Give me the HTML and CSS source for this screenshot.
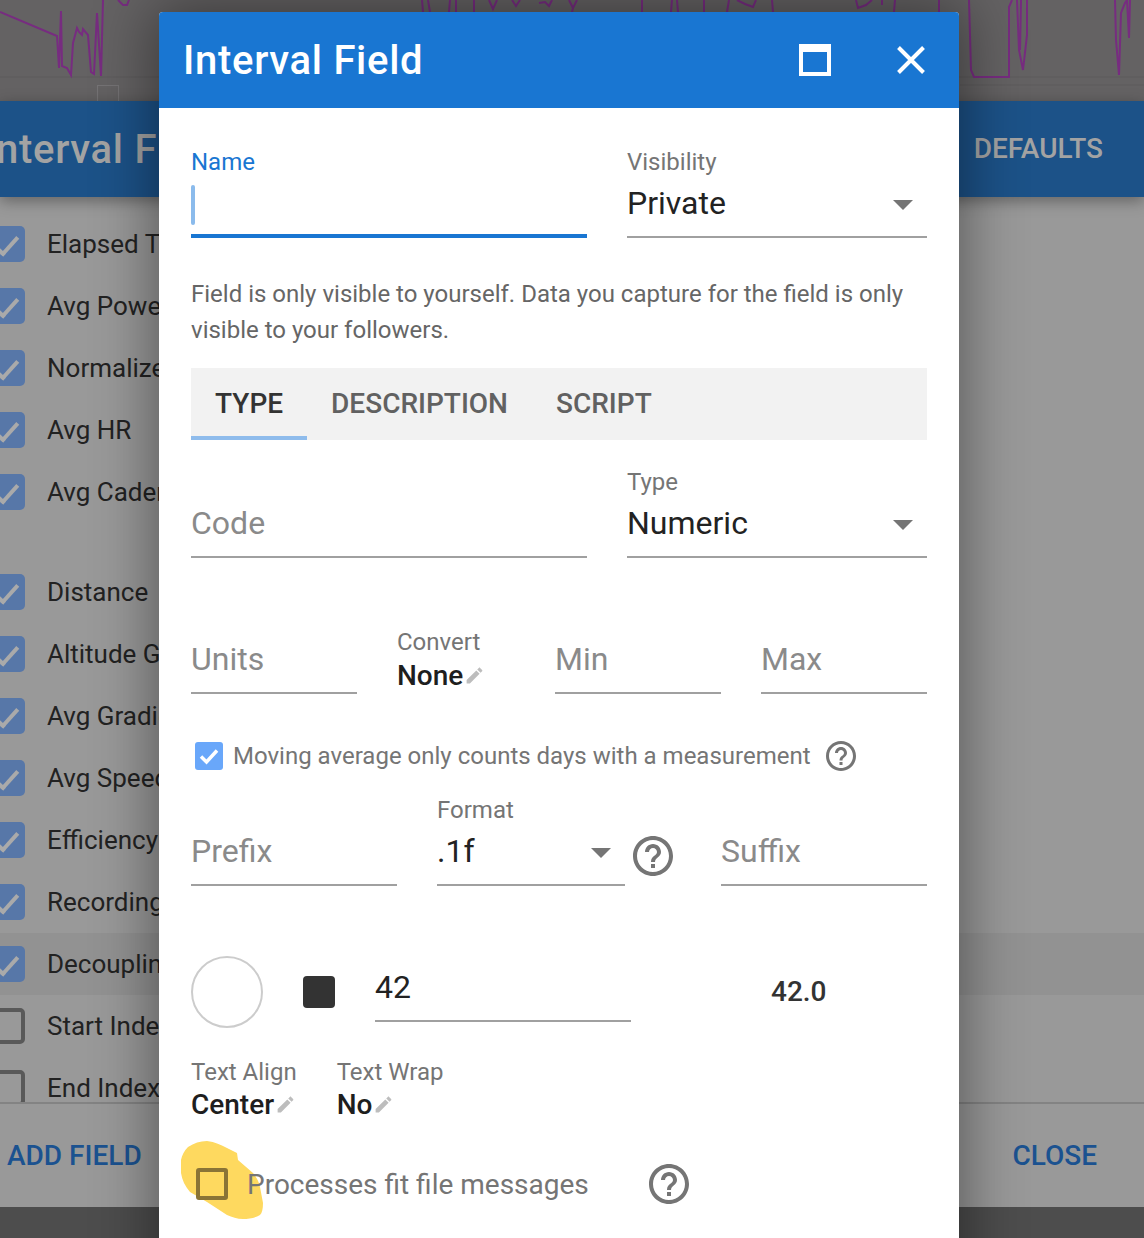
FILE: index.html
```html
<!DOCTYPE html>
<html lang="en">
<head>
  <meta charset="UTF-8" />
  <title>Interval Field</title>
  <link rel="stylesheet" href="styles.css">
</head>
<body>
  <div class="page">
    <div class="chart">
      <svg class="chart-lines" width="1144" height="101" viewBox="0 0 1144 101">
        <path class="grid" d="M0 77H1144"/>
        <path class="grid" d="M960 85H1144"/>
        <path d="M0 12L57 36L59 68L61 11L62 66L67 68L71 75L73 43L77 28L79 32L82 35L83 29L88 35L91 72L94 74L97 13L101 76L103 0"/>
        <path d="M118 0L123 5L127 5L129 0"/>
        <path d="M422 0L423 12M428 0L430 12M449 12L450 0M456 0L456 12M474 0L474 12"/>
        <path d="M489 0L493 9L497 0M512 0L516 6L520 0M539 3L545 2L549 6L552 0"/>
        <path d="M569 0L573 8L572 12M577 0L573 8M642 0L642 12M671 12L672 0M677 0L678 12M704 0L704 12M729 0L727 12"/>
        <path d="M737 0L745 4L753 7L756 0M772 0L773 12"/>
        <path d="M856 0L858 8L866 5L872 0M882 0L882 5M895 0L894 12M939 0L939 12"/>
        <path d="M969 0L971 70L974 77L1009 77L1009 7L1012 0"/>
        <path d="M1017 0L1019 50L1023 70L1027 35L1027 0M1021 0L1020 50"/>
        <path d="M1115 0L1116 40L1119 75L1121 13L1125 3L1127 0M1127 0L1129 38L1130 0"/>
      </svg>
      <div class="chart-box"></div>
    </div>
    <div class="page-head">
      <span class="page-title">Interval Field</span>
      <span class="page-action">DEFAULTS</span>
    </div>
    <div class="page-list">
      <div class="page-row"><span class="tick on"></span><span class="row-text">Elapsed Time</span></div>
      <div class="page-row"><span class="tick on"></span><span class="row-text">Avg Power</span></div>
      <div class="page-row"><span class="tick on"></span><span class="row-text">Normalized</span></div>
      <div class="page-row"><span class="tick on"></span><span class="row-text">Avg HR</span></div>
      <div class="page-row"><span class="tick on"></span><span class="row-text">Avg Cadence</span></div>
      <div class="page-spacer"></div>
      <div class="page-row"><span class="tick on"></span><span class="row-text">Distance</span></div>
      <div class="page-row"><span class="tick on"></span><span class="row-text">Altitude Gain</span></div>
      <div class="page-row"><span class="tick on"></span><span class="row-text">Avg Gradient</span></div>
      <div class="page-row"><span class="tick on"></span><span class="row-text">Avg Speed</span></div>
      <div class="page-row"><span class="tick on"></span><span class="row-text">Efficiency</span></div>
      <div class="page-row"><span class="tick on"></span><span class="row-text">Recording</span></div>
      <div class="page-row shaded"><span class="tick on"></span><span class="row-text">Decoupling</span></div>
      <div class="page-row"><span class="tick"></span><span class="row-text">Start Index</span></div>
      <div class="page-row"><span class="tick"></span><span class="row-text">End Index</span></div>
    </div>
    <div class="page-foot">
      <span class="foot-btn">ADD FIELD</span>
      <span class="foot-btn">CLOSE</span>
    </div>
    <div class="page-bottom"></div>
  </div>

  <div class="modal">
    <div class="modal-head">
      <h1>Interval Field</h1>
      <span class="max-icon"></span>
      <svg class="close-icon" width="28" height="28" viewBox="0 0 28 28"><path d="M1.500 1.500L26.500 26.500M26.500 1.500L1.500 26.500"/></svg>
    </div>
    <div class="modal-body">
      <div class="row two-col">
        <div class="field">
          <label class="active">Name</label>
          <div class="input focused"><span class="caret"></span></div>
        </div>
        <div class="field">
          <label>Visibility</label>
          <div class="input select">Private<span class="arrow"></span></div>
        </div>
      </div>

      <p class="hint">Field is only visible to yourself. Data you capture for the field is only visible to your followers.</p>

      <div class="tabs">
        <span class="tab selected">TYPE</span>
        <span class="tab">DESCRIPTION</span>
        <span class="tab">SCRIPT</span>
      </div>

      <div class="row two-col code-row">
        <div class="field">
          <div class="input empty">Code</div>
        </div>
        <div class="field">
          <label>Type</label>
          <div class="input select">Numeric<span class="arrow"></span></div>
        </div>
      </div>

      <div class="row units-row">
        <div class="field"><div class="input empty">Units</div></div>
        <div class="picker">
          <label>Convert</label>
          <div class="picker-value">None<svg class="pencil" width="21" height="21" viewBox="0 0 24 24"><path d="M3 17.250V21h3.750L17.810 9.940l-3.750-3.750L3 17.250zM20.710 7.040c.39-.39.39-1.020 0-1.410l-2.340-2.340c-.39-.39-1.020-.39-1.410 0l-1.830 1.830 3.750 3.750 1.830-1.830z"/></svg></div>
        </div>
        <div class="field"><div class="input empty">Min</div></div>
        <div class="field"><div class="input empty">Max</div></div>
      </div>

      <div class="check-row moving">
        <span class="box checked"><svg width="28" height="28" viewBox="0 0 28 28"><path d="M6 14.500L11.500 20L22 8.500"/></svg></span>
        <span class="check-label">Moving average only counts days with a measurement</span>
        <svg class="help" width="36" height="36" viewBox="0 0 24 24"><path d="M11 18h2v-2h-2v2zm1-16C6.480 2 2 6.480 2 12s4.480 10 10 10 10-4.480 10-10S17.520 2 12 2zm0 18c-4.410 0-8-3.590-8-8s3.590-8 8-8 8 3.590 8 8-3.590 8-8 8zm0-14c-2.210 0-4 1.790-4 4h2c0-1.100.9-2 2-2s2 .9 2 2c0 2-3 1.750-3 5h2c0-2.250 3-2.500 3-5 0-2.210-1.790-4-4-4z"/></svg>
      </div>

      <div class="format-row">
        <div class="field prefix"><div class="input empty">Prefix</div></div>
        <div class="field format">
          <label>Format</label>
          <div class="input select">.1f<span class="arrow"></span></div>
        </div>
        <svg class="help" width="48" height="48" viewBox="0 0 24 24"><path d="M11 18h2v-2h-2v2zm1-16C6.480 2 2 6.480 2 12s4.480 10 10 10 10-4.480 10-10S17.520 2 12 2zm0 18c-4.410 0-8-3.590-8-8s3.590-8 8-8 8 3.590 8 8-3.590 8-8 8zm0-14c-2.210 0-4 1.790-4 4h2c0-1.100.9-2 2-2s2 .9 2 2c0 2-3 1.750-3 5h2c0-2.250 3-2.500 3-5 0-2.210-1.790-4-4-4z"/></svg>
        <div class="field suffix"><div class="input empty">Suffix</div></div>
      </div>

      <div class="color-row">
        <span class="swatch-round"></span>
        <span class="swatch-square"></span>
        <div class="field sample-input"><div class="input">42</div></div>
        <span class="sample-out">42.0</span>
      </div>

      <div class="pick-row">
        <div class="picker">
          <label>Text Align</label>
          <div class="picker-value">Center<svg class="pencil" width="21" height="21" viewBox="0 0 24 24"><path d="M3 17.250V21h3.750L17.810 9.940l-3.750-3.750L3 17.250zM20.710 7.040c.39-.39.39-1.020 0-1.410l-2.340-2.340c-.39-.39-1.020-.39-1.410 0l-1.830 1.830 3.750 3.750 1.830-1.830z"/></svg></div>
        </div>
        <div class="picker">
          <label>Text Wrap</label>
          <div class="picker-value">No<svg class="pencil" width="21" height="21" viewBox="0 0 24 24"><path d="M3 17.250V21h3.750L17.810 9.940l-3.750-3.750L3 17.250zM20.710 7.040c.39-.39.39-1.020 0-1.410l-2.340-2.340c-.39-.39-1.020-.39-1.410 0l-1.830 1.830 3.750 3.750 1.830-1.830z"/></svg></div>
        </div>
      </div>

      <div class="check-row fit-row">
        <svg class="marker" width="86" height="84" viewBox="0 0 86 84"><path d="M28 3C36 4 42 7 48 10L58 15L59 22L74 35C78 40 80 44 81 49L84 65C84 71 83 75 81 77C76 80 70 81 64 81C58 81 53 79 48 77L28 64L11 54C6 48 3 42 2 35L2 22C3 17 5 13 9 9C15 5 21 3 28 3Z"/></svg>
        <span class="box plain"></span>
        <span class="check-label">Processes fit file messages</span>
        <svg class="help" width="48" height="48" viewBox="0 0 24 24"><path d="M11 18h2v-2h-2v2zm1-16C6.480 2 2 6.480 2 12s4.480 10 10 10 10-4.480 10-10S17.520 2 12 2zm0 18c-4.410 0-8-3.590-8-8s3.590-8 8-8 8 3.590 8 8-3.590 8-8 8zm0-14c-2.210 0-4 1.790-4 4h2c0-1.100.9-2 2-2s2 .9 2 2c0 2-3 1.750-3 5h2c0-2.250 3-2.500 3-5 0-2.210-1.790-4-4-4z"/></svg>
      </div>
    </div>
  </div>
</body>
</html>
```

FILE: styles.css
```css
html, body {
  margin: 0;
  padding: 0;
  height: 1238px;
  overflow: hidden;
}

body {
  position: relative;
  font-family: Roboto, 'Liberation Sans', sans-serif;
  background: #484848;
}

/* page behind the dialog */
.page {
  display: flex;
  flex-direction: column;
  height: 1238px;
  overflow: hidden;
}

.chart {
  position: relative;
  height: 101px;
  background: #646263;
}

.chart-lines {
  display: block;
}

.chart-lines path {
  fill: none;
  stroke: #772c80;
  stroke-width: 2;
}

.chart-lines path.grid {
  stroke: #5d5b5c;
  stroke-width: 1;
}

.chart-box {
  position: absolute;
  left: 97px;
  top: 85px;
  width: 20px;
  height: 16px;
  border: 1px solid #757375;
  border-bottom: 0;
}

.page-head {
  position: relative;
  display: flex;
  justify-content: space-between;
  align-items: center;
  height: 96px;
  flex-shrink: 0;
  background: #1c5288;
  box-shadow: 0 4px 14px rgba(0, 0, 0, 0.35);
  z-index: 1;
}

.page-title {
  width: 175px;
  margin-left: -16px;
  overflow: hidden;
  white-space: nowrap;
  font-size: 40px;
  font-weight: 500;
  letter-spacing: 0.7px;
  color: #a3a3a3;
}

.page-action {
  margin-right: 41px;
  margin-bottom: 2px;
  font-size: 28px;
  font-weight: 500;
  color: #a3a3a3;
}

.page-list {
  height: 905px;
  flex-shrink: 0;
  overflow: hidden;
  padding-top: 16px;
  box-sizing: border-box;
  background: #999;
}

.page-row {
  display: flex;
  align-items: center;
  gap: 22px;
  height: 62px;
  margin-left: -11px;
  font-size: 26px;
  color: #222;
}

.row-text {
  width: 112px;
  overflow: hidden;
  white-space: nowrap;
}

.page-row.shaded {
  background: #929292;
}

.page-spacer {
  height: 38px;
}

.tick {
  position: relative;
  box-sizing: border-box;
  width: 36px;
  height: 36px;
  border: 4px solid #595959;
  border-radius: 5px;
  flex-shrink: 0;
}

.tick.on {
  background: #5777a8;
  border: 0;
}

.tick.on::after {
  content: "";
  position: absolute;
  left: 10px;
  top: 5px;
  width: 10px;
  height: 20px;
  border: solid #aaa;
  border-width: 0 4px 4px 0;
  transform: rotate(42deg);
}

.page-foot {
  display: flex;
  justify-content: space-between;
  align-items: center;
  height: 105px;
  flex-shrink: 0;
  box-sizing: border-box;
  padding: 0 47px 0 7px;
  background: #999;
  border-top: 2px solid #838383;
}

.foot-btn {
  font-size: 28px;
  font-weight: 500;
  color: #1b5290;
}

.page-bottom {
  flex: 1;
  background: #4d4d4d;
}

/* dialog */
.modal {
  position: absolute;
  left: 159px;
  top: 12px;
  z-index: 2;
  width: 800px;
  height: 1300px;
  background: #fff;
  border-radius: 4px 4px 0 0;
  box-shadow: 0 0 60px 6px rgba(0, 0, 0, 0.42);
}

.modal-head {
  display: flex;
  align-items: center;
  height: 96px;
  padding: 0 34px 0 24px;
  background: #1976d2;
  border-radius: 4px 4px 0 0;
  color: #fff;
}

.modal-head h1 {
  flex: 1;
  margin: 0;
  font-size: 40px;
  font-weight: 500;
  letter-spacing: 0.7px;
}

.max-icon {
  box-sizing: border-box;
  width: 32px;
  height: 32px;
  margin-right: 66px;
  border: 4px solid #fff;
  border-top-width: 8px;
}

.close-icon path {
  fill: none;
  stroke: #fff;
  stroke-width: 4;
}

.modal-body {
  padding: 40px 32px 0;
}

.row {
  display: grid;
  column-gap: 40px;
}

.two-col {
  grid-template-columns: 396px 300px;
  align-items: end;
}

.field label,
.picker label {
  display: block;
  height: 28px;
  line-height: 29px;
  font-size: 24px;
  color: #757575;
}

.field label.active {
  color: #1976d2;
}

.input {
  position: relative;
  height: 54px;
  line-height: 54px;
  padding-bottom: 6px;
  border-bottom: 2px solid #a0a0a0;
  font-size: 32px;
  color: #222;
}

.input.empty {
  color: #8a8a8a;
}

.input.focused {
  padding-bottom: 4px;
  border-bottom: 4px solid #1976d2;
}

.caret {
  position: absolute;
  left: 0;
  top: 9px;
  width: 4px;
  height: 40px;
  border-radius: 2px;
  background: #8bbbec;
}

.arrow {
  position: absolute;
  right: 14px;
  top: 24px;
  width: 0;
  height: 0;
  border-left: 10px solid transparent;
  border-right: 10px solid transparent;
  border-top: 10px solid #757575;
}

.hint {
  margin: 38px 0 20px;
  font-size: 24px;
  line-height: 36px;
  color: #666;
}

.tabs {
  display: flex;
  height: 72px;
  background: #f2f2f2;
}

.tab {
  box-sizing: border-box;
  height: 72px;
  padding: 0 24px;
  line-height: 72px;
  font-size: 28px;
  font-weight: 500;
  color: #616161;
}

.tab.selected {
  color: #333;
  border-bottom: 4px solid #8fbcec;
}

.code-row {
  margin-top: 28px;
}

.units-row {
  grid-template-columns: 166px 118px 166px 166px;
  align-items: end;
  height: 66px;
  margin-top: 70px;
}

.picker-value {
  display: flex;
  align-items: center;
  height: 36px;
  font-size: 28px;
  font-weight: 500;
  color: #1e1e1e;
}

.units-row .picker {
  align-self: start;
}

.units-row .picker-value {
  margin-top: 1px;
}

.pencil {
  fill: #bdbdbd;
  margin-left: 1px;
}

.check-row {
  position: relative;
  display: flex;
  align-items: center;
  height: 40px;
}

.moving {
  margin-top: 42px;
}

.box {
  flex-shrink: 0;
  box-sizing: border-box;
  border-radius: 3px;
}

.box.checked {
  width: 28px;
  height: 28px;
  margin: 0 10px 0 4px;
  background: #69a7fa;
}

.box.checked svg {
  display: block;
}

.box.checked path {
  fill: none;
  stroke: #fff;
  stroke-width: 3.500;
}

.check-label {
  font-size: 24px;
  color: #757575;
}

.help {
  flex-shrink: 0;
  fill: #757575;
}

.moving .help {
  margin-left: 12px;
}

.format-row {
  display: flex;
  align-items: flex-end;
  margin-top: 20px;
}

.prefix,
.suffix {
  width: 206px;
}

.format {
  width: 188px;
  margin-left: 40px;
}

.format-row .help {
  margin: 0 0 6px 4px;
}

.suffix {
  margin-left: 44px;
}

.color-row {
  display: flex;
  align-items: center;
  height: 72px;
  margin-top: 70px;
}

.swatch-round {
  box-sizing: border-box;
  width: 72px;
  height: 72px;
  border: 2px solid #ccc;
  border-radius: 50%;
}

.swatch-square {
  width: 32px;
  height: 32px;
  margin: 0 40px;
  border-radius: 4px;
  background: #333;
}

.sample-input {
  align-self: flex-start;
  width: 256px;
  margin-top: 4px;
}

.sample-out {
  margin: 0 0 2px 140px;
  font-size: 28px;
  font-weight: 500;
  color: #333;
}

.pick-row {
  display: flex;
  gap: 40px;
  margin-top: 30px;
}

.fit-row {
  margin-top: 42px;
}

.marker {
  position: absolute;
  left: -12px;
  top: -26px;
  fill: #fed95f;
}

.box.plain {
  position: relative;
  width: 32px;
  height: 32px;
  margin: 0 19px 0 5px;
  border: 4px solid #8a7436;
}

.fit-row .check-label {
  position: relative;
  font-size: 28px;
}

.fit-row .help {
  margin-left: 56px;
}
```
